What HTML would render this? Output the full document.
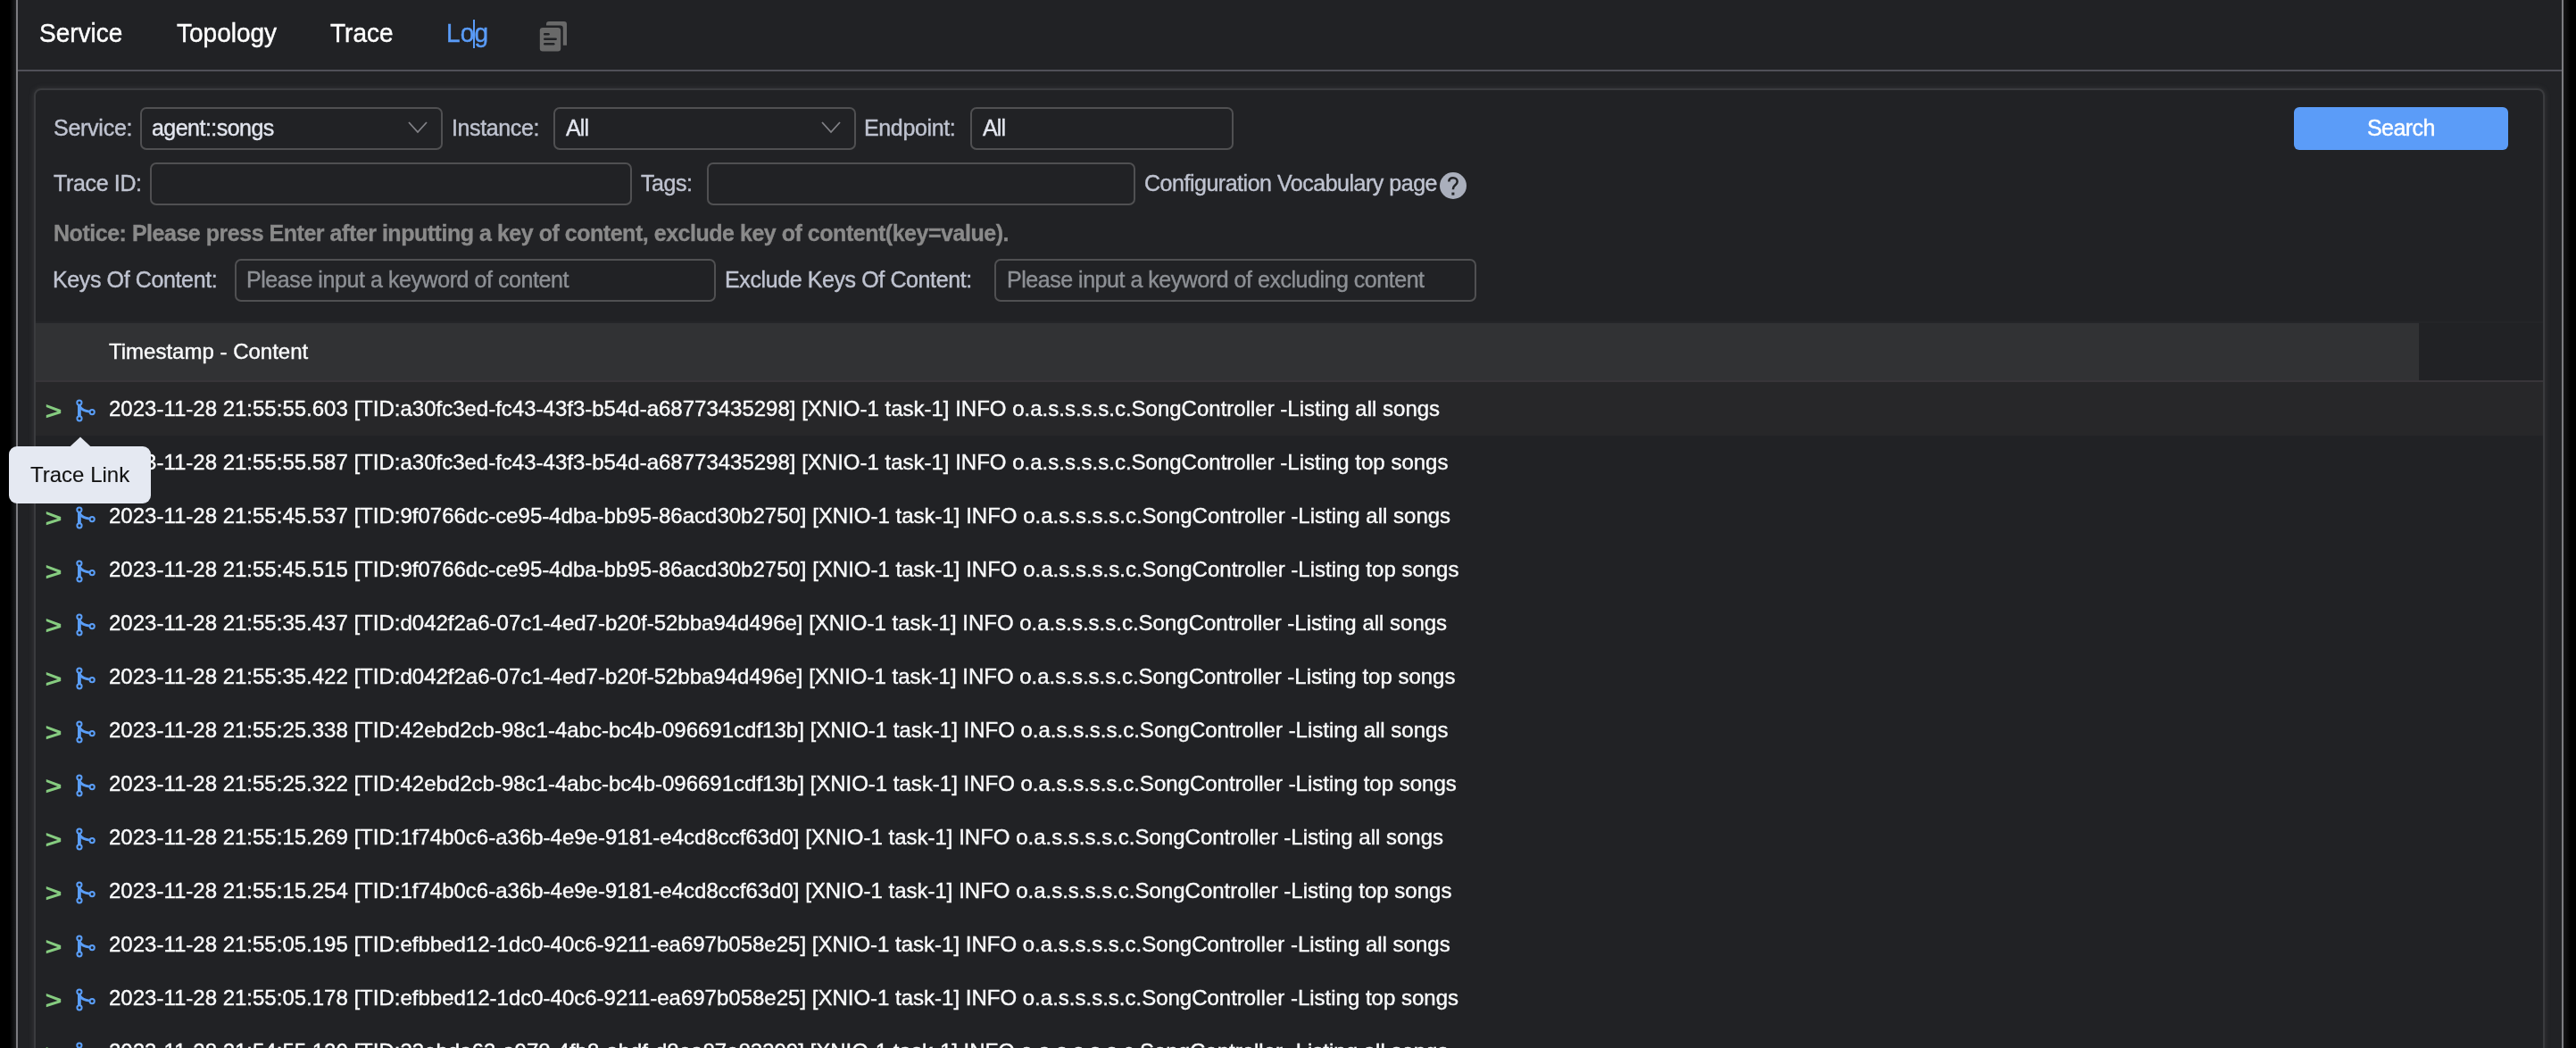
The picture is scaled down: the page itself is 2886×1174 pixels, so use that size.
<!DOCTYPE html>
<html><head><meta charset="utf-8">
<style>
*{box-sizing:border-box;margin:0;padding:0}
html,body{width:2886px;height:1174px;overflow:hidden;background:#000;font-family:"Liberation Sans",sans-serif}
.abs{position:absolute}
#lshadow{position:absolute;left:0;top:0;width:18px;height:1174px;background:linear-gradient(to right,#000 0,#000 11px,#1e1f21 18px)}
#rshadow{position:absolute;left:2871px;top:0;width:15px;height:1174px;background:linear-gradient(to left,#000 0,#000 6px,#161617 14px)}
#main{position:absolute;left:18px;top:0;width:2854px;height:1174px;background:#212225;border-left:2px solid #7c7c80;border-right:2px solid #7c7c80}
.t{position:absolute;white-space:pre;line-height:1;-webkit-text-stroke-width:0.4px;will-change:transform}
.nav{font-size:28px;color:#fff;top:24px;transform:scaleY(1.07);transform-origin:0 23.7px}
#navline{position:absolute;left:20px;top:78px;width:2850px;height:2px;background:#505058}
#panel{position:absolute;left:38px;top:99px;width:2813px;height:1200px;border:2px solid #3a3b3e;border-radius:8px;background:#212225;box-shadow:0 0 6px rgba(110,110,115,0.28)}
.lbl{font-size:25px;color:#bfc3d0}
.inp{position:absolute;height:48px;border:2px solid #505052;border-radius:7px}
.val{font-size:25px;color:#e2e5ee}
.ph{font-size:25px;color:#8d9095}
.rt{font-size:24px;color:#fafbfc;letter-spacing:0px}
</style></head><body>
<div id="lshadow"></div>
<div id="rshadow"></div>
<div id="main"></div>
<div class="t nav" style="left:44px">Service</div>
<div class="t nav" style="left:198px">Topology</div>
<div class="t nav" style="left:370px">Trace</div>
<div class="t nav" style="left:500px;color:#5a9cf8;letter-spacing:0.2px">Log</div>
<div class="abs" style="left:530px;top:22px;width:2px;height:32px;background:#5a9cf8"></div>
<svg class="abs" style="left:600px;top:20px" width="40" height="42" viewBox="600 20 40 42">
  <path d="M612 28.4 V27 a3 3 0 0 1 3-3 H632 a3 3 0 0 1 3 3 V50.8 H630.8 V31.5 a3 3 0 0 0 -3-3 Z" fill="#696969"/>
  <rect x="604.8" y="31" width="23.4" height="26.5" rx="3.2" fill="#696969"/>
  <rect x="609" y="37" width="6.8" height="2.6" rx="1.3" fill="#212225"/>
  <rect x="609" y="42.4" width="14.9" height="2.6" rx="1.3" fill="#212225"/>
  <rect x="609" y="47.9" width="12.5" height="2.6" rx="1.3" fill="#212225"/>
</svg>
<div id="navline"></div>
<div id="panel"></div>

<!-- row 1 -->
<div class="t lbl" style="left:60px;top:131px;letter-spacing:-0.26px">Service:</div>
<div class="inp" style="left:157px;top:120px;width:339px"></div>
<div class="t val" style="left:170.4px;top:131px;letter-spacing:-0.53px">agent::songs</div>
<svg class="abs" style="left:455px;top:134px" width="26" height="18" viewBox="0 0 26 18"><polyline points="3,3 13,14 23,3" fill="none" stroke="#828287" stroke-width="1.8"/></svg>
<div class="t lbl" style="left:505.6px;top:131px;letter-spacing:-0.375px">Instance:</div>
<div class="inp" style="left:620px;top:120px;width:339px"></div>
<div class="t val" style="left:633.8px;top:131px;letter-spacing:-0.85px">All</div>
<svg class="abs" style="left:918px;top:134px" width="26" height="18" viewBox="0 0 26 18"><polyline points="3,3 13,14 23,3" fill="none" stroke="#828287" stroke-width="1.8"/></svg>
<div class="t lbl" style="left:967.9px;top:131px;letter-spacing:-0.363px">Endpoint:</div>
<div class="inp" style="left:1087px;top:120px;width:295px"></div>
<div class="t val" style="left:1100.8px;top:131px;letter-spacing:-0.85px">All</div>
<div class="abs" style="left:2570px;top:120px;width:240px;height:48px;background:#5b9cf8;border-radius:6px"></div>
<div class="t" style="left:2651.9px;top:131px;font-size:25px;color:#fff;letter-spacing:-0.56px">Search</div>

<!-- row 2 -->
<div class="t lbl" style="left:60px;top:193px;letter-spacing:-0.35px">Trace ID:</div>
<div class="inp" style="left:168px;top:182px;width:540px;height:48px"></div>
<div class="t lbl" style="left:718px;top:193px;letter-spacing:-0.425px">Tags:</div>
<div class="inp" style="left:792px;top:182px;width:480px;height:48px"></div>
<div class="t lbl" style="left:1281.7px;top:193px;letter-spacing:-0.479px">Configuration Vocabulary page</div>
<svg class="abs" style="left:1608px;top:188px" width="40" height="40" viewBox="1608 188 40 40">
  <circle cx="1628" cy="208" r="15" fill="#aaafbc"/>
  <path d="M1623.3,203.6 C1623.3,200.6 1625.4,199.3 1628,199.3 C1630.7,199.3 1632.7,201.1 1632.7,203.4 C1632.7,205.6 1631.3,206.6 1629.9,207.8 C1628.5,209 1627.9,210.2 1627.9,212.2" fill="none" stroke="#212225" stroke-width="2.5"/>
  <rect x="1626.4" y="215.6" width="3" height="3" fill="#212225"/>
</svg>

<!-- notice -->
<div class="t" style="left:59.7px;top:249px;font-size:25px;font-weight:bold;color:#8a8a8a;letter-spacing:-0.473px;-webkit-text-stroke-width:0.35px">Notice: Please press Enter after inputting a key of content, exclude key of content(key=value).</div>

<!-- row 4 -->
<div class="t lbl" style="left:58.7px;top:301px;letter-spacing:-0.38px">Keys Of Content:</div>
<div class="inp" style="left:263px;top:290px;width:539px;height:48px"></div>
<div class="t ph" style="left:275.6px;top:301px;letter-spacing:-0.431px">Please input a keyword of content</div>
<div class="t lbl" style="left:812px;top:301px;letter-spacing:-0.396px">Exclude Keys Of Content:</div>
<div class="inp" style="left:1114px;top:290px;width:540px;height:48px"></div>
<div class="t ph" style="left:1127.8px;top:301px;letter-spacing:-0.471px">Please input a keyword of excluding content</div>

<!-- table header -->
<div class="abs" style="left:40px;top:360px;width:2809px;height:2px;background:#242528"></div>
<div class="abs" style="left:40px;top:362px;width:2670px;height:64px;background:#313234"></div>
<div class="abs" style="left:40px;top:426px;width:2809px;height:2px;background:#383539"></div>
<div class="t" style="left:122.2px;top:382px;font-size:24px;color:#fafbfc">Timestamp - Content</div>

<div class="abs" style="left:40px;top:428px;width:2809px;height:60px;background:#272729"></div>
<svg class="abs" style="left:44px;top:428px" width="70" height="60" viewBox="44 428 70 60"><g transform="translate(0,0)"><path d="M51.8,453 L68.2,458.9 L68.2,462.9 L51.8,468.2 L51.8,465.1 L64.5,460.9 L51.8,456.1 Z" fill="#86cc80"/><path d="M88.9,454 V466" stroke="#5a9ef8" stroke-width="3.8" fill="none"/><path d="M89.5,455.5 Q92,460 100.5,461.2" stroke="#5a9ef8" stroke-width="2.8" fill="none"/><circle cx="88.9" cy="451.1" r="2.6" stroke="#5a9ef8" stroke-width="2" fill="#212225"/><circle cx="89" cy="468.8" r="2.6" stroke="#5a9ef8" stroke-width="2" fill="#212225"/><circle cx="103.2" cy="461.6" r="2.6" stroke="#5a9ef8" stroke-width="2" fill="#212225"/></g></svg>
<div class="t rt" style="left:121.8px;top:446px">2023-11-28 21:55:55.603 [TID:a30fc3ed-fc43-43f3-b54d-a68773435298] [XNIO-1 task-1] INFO o.a.s.s.s.s.c.SongController -Listing all songs</div>
<svg class="abs" style="left:44px;top:488px" width="70" height="60" viewBox="44 488 70 60"><g transform="translate(0,60)"><path d="M51.8,453 L68.2,458.9 L68.2,462.9 L51.8,468.2 L51.8,465.1 L64.5,460.9 L51.8,456.1 Z" fill="#86cc80"/><path d="M88.9,454 V466" stroke="#5a9ef8" stroke-width="3.8" fill="none"/><path d="M89.5,455.5 Q92,460 100.5,461.2" stroke="#5a9ef8" stroke-width="2.8" fill="none"/><circle cx="88.9" cy="451.1" r="2.6" stroke="#5a9ef8" stroke-width="2" fill="#212225"/><circle cx="89" cy="468.8" r="2.6" stroke="#5a9ef8" stroke-width="2" fill="#212225"/><circle cx="103.2" cy="461.6" r="2.6" stroke="#5a9ef8" stroke-width="2" fill="#212225"/></g></svg>
<div class="t rt" style="left:121.8px;top:506px">2023-11-28 21:55:55.587 [TID:a30fc3ed-fc43-43f3-b54d-a68773435298] [XNIO-1 task-1] INFO o.a.s.s.s.s.c.SongController -Listing top songs</div>
<svg class="abs" style="left:44px;top:548px" width="70" height="60" viewBox="44 548 70 60"><g transform="translate(0,120)"><path d="M51.8,453 L68.2,458.9 L68.2,462.9 L51.8,468.2 L51.8,465.1 L64.5,460.9 L51.8,456.1 Z" fill="#86cc80"/><path d="M88.9,454 V466" stroke="#5a9ef8" stroke-width="3.8" fill="none"/><path d="M89.5,455.5 Q92,460 100.5,461.2" stroke="#5a9ef8" stroke-width="2.8" fill="none"/><circle cx="88.9" cy="451.1" r="2.6" stroke="#5a9ef8" stroke-width="2" fill="#212225"/><circle cx="89" cy="468.8" r="2.6" stroke="#5a9ef8" stroke-width="2" fill="#212225"/><circle cx="103.2" cy="461.6" r="2.6" stroke="#5a9ef8" stroke-width="2" fill="#212225"/></g></svg>
<div class="t rt" style="left:121.8px;top:566px">2023-11-28 21:55:45.537 [TID:9f0766dc-ce95-4dba-bb95-86acd30b2750] [XNIO-1 task-1] INFO o.a.s.s.s.s.c.SongController -Listing all songs</div>
<svg class="abs" style="left:44px;top:608px" width="70" height="60" viewBox="44 608 70 60"><g transform="translate(0,180)"><path d="M51.8,453 L68.2,458.9 L68.2,462.9 L51.8,468.2 L51.8,465.1 L64.5,460.9 L51.8,456.1 Z" fill="#86cc80"/><path d="M88.9,454 V466" stroke="#5a9ef8" stroke-width="3.8" fill="none"/><path d="M89.5,455.5 Q92,460 100.5,461.2" stroke="#5a9ef8" stroke-width="2.8" fill="none"/><circle cx="88.9" cy="451.1" r="2.6" stroke="#5a9ef8" stroke-width="2" fill="#212225"/><circle cx="89" cy="468.8" r="2.6" stroke="#5a9ef8" stroke-width="2" fill="#212225"/><circle cx="103.2" cy="461.6" r="2.6" stroke="#5a9ef8" stroke-width="2" fill="#212225"/></g></svg>
<div class="t rt" style="left:121.8px;top:626px">2023-11-28 21:55:45.515 [TID:9f0766dc-ce95-4dba-bb95-86acd30b2750] [XNIO-1 task-1] INFO o.a.s.s.s.s.c.SongController -Listing top songs</div>
<svg class="abs" style="left:44px;top:668px" width="70" height="60" viewBox="44 668 70 60"><g transform="translate(0,240)"><path d="M51.8,453 L68.2,458.9 L68.2,462.9 L51.8,468.2 L51.8,465.1 L64.5,460.9 L51.8,456.1 Z" fill="#86cc80"/><path d="M88.9,454 V466" stroke="#5a9ef8" stroke-width="3.8" fill="none"/><path d="M89.5,455.5 Q92,460 100.5,461.2" stroke="#5a9ef8" stroke-width="2.8" fill="none"/><circle cx="88.9" cy="451.1" r="2.6" stroke="#5a9ef8" stroke-width="2" fill="#212225"/><circle cx="89" cy="468.8" r="2.6" stroke="#5a9ef8" stroke-width="2" fill="#212225"/><circle cx="103.2" cy="461.6" r="2.6" stroke="#5a9ef8" stroke-width="2" fill="#212225"/></g></svg>
<div class="t rt" style="left:121.8px;top:686px">2023-11-28 21:55:35.437 [TID:d042f2a6-07c1-4ed7-b20f-52bba94d496e] [XNIO-1 task-1] INFO o.a.s.s.s.s.c.SongController -Listing all songs</div>
<svg class="abs" style="left:44px;top:728px" width="70" height="60" viewBox="44 728 70 60"><g transform="translate(0,300)"><path d="M51.8,453 L68.2,458.9 L68.2,462.9 L51.8,468.2 L51.8,465.1 L64.5,460.9 L51.8,456.1 Z" fill="#86cc80"/><path d="M88.9,454 V466" stroke="#5a9ef8" stroke-width="3.8" fill="none"/><path d="M89.5,455.5 Q92,460 100.5,461.2" stroke="#5a9ef8" stroke-width="2.8" fill="none"/><circle cx="88.9" cy="451.1" r="2.6" stroke="#5a9ef8" stroke-width="2" fill="#212225"/><circle cx="89" cy="468.8" r="2.6" stroke="#5a9ef8" stroke-width="2" fill="#212225"/><circle cx="103.2" cy="461.6" r="2.6" stroke="#5a9ef8" stroke-width="2" fill="#212225"/></g></svg>
<div class="t rt" style="left:121.8px;top:746px">2023-11-28 21:55:35.422 [TID:d042f2a6-07c1-4ed7-b20f-52bba94d496e] [XNIO-1 task-1] INFO o.a.s.s.s.s.c.SongController -Listing top songs</div>
<svg class="abs" style="left:44px;top:788px" width="70" height="60" viewBox="44 788 70 60"><g transform="translate(0,360)"><path d="M51.8,453 L68.2,458.9 L68.2,462.9 L51.8,468.2 L51.8,465.1 L64.5,460.9 L51.8,456.1 Z" fill="#86cc80"/><path d="M88.9,454 V466" stroke="#5a9ef8" stroke-width="3.8" fill="none"/><path d="M89.5,455.5 Q92,460 100.5,461.2" stroke="#5a9ef8" stroke-width="2.8" fill="none"/><circle cx="88.9" cy="451.1" r="2.6" stroke="#5a9ef8" stroke-width="2" fill="#212225"/><circle cx="89" cy="468.8" r="2.6" stroke="#5a9ef8" stroke-width="2" fill="#212225"/><circle cx="103.2" cy="461.6" r="2.6" stroke="#5a9ef8" stroke-width="2" fill="#212225"/></g></svg>
<div class="t rt" style="left:121.8px;top:806px">2023-11-28 21:55:25.338 [TID:42ebd2cb-98c1-4abc-bc4b-096691cdf13b] [XNIO-1 task-1] INFO o.a.s.s.s.s.c.SongController -Listing all songs</div>
<svg class="abs" style="left:44px;top:848px" width="70" height="60" viewBox="44 848 70 60"><g transform="translate(0,420)"><path d="M51.8,453 L68.2,458.9 L68.2,462.9 L51.8,468.2 L51.8,465.1 L64.5,460.9 L51.8,456.1 Z" fill="#86cc80"/><path d="M88.9,454 V466" stroke="#5a9ef8" stroke-width="3.8" fill="none"/><path d="M89.5,455.5 Q92,460 100.5,461.2" stroke="#5a9ef8" stroke-width="2.8" fill="none"/><circle cx="88.9" cy="451.1" r="2.6" stroke="#5a9ef8" stroke-width="2" fill="#212225"/><circle cx="89" cy="468.8" r="2.6" stroke="#5a9ef8" stroke-width="2" fill="#212225"/><circle cx="103.2" cy="461.6" r="2.6" stroke="#5a9ef8" stroke-width="2" fill="#212225"/></g></svg>
<div class="t rt" style="left:121.8px;top:866px">2023-11-28 21:55:25.322 [TID:42ebd2cb-98c1-4abc-bc4b-096691cdf13b] [XNIO-1 task-1] INFO o.a.s.s.s.s.c.SongController -Listing top songs</div>
<svg class="abs" style="left:44px;top:908px" width="70" height="60" viewBox="44 908 70 60"><g transform="translate(0,480)"><path d="M51.8,453 L68.2,458.9 L68.2,462.9 L51.8,468.2 L51.8,465.1 L64.5,460.9 L51.8,456.1 Z" fill="#86cc80"/><path d="M88.9,454 V466" stroke="#5a9ef8" stroke-width="3.8" fill="none"/><path d="M89.5,455.5 Q92,460 100.5,461.2" stroke="#5a9ef8" stroke-width="2.8" fill="none"/><circle cx="88.9" cy="451.1" r="2.6" stroke="#5a9ef8" stroke-width="2" fill="#212225"/><circle cx="89" cy="468.8" r="2.6" stroke="#5a9ef8" stroke-width="2" fill="#212225"/><circle cx="103.2" cy="461.6" r="2.6" stroke="#5a9ef8" stroke-width="2" fill="#212225"/></g></svg>
<div class="t rt" style="left:121.8px;top:926px">2023-11-28 21:55:15.269 [TID:1f74b0c6-a36b-4e9e-9181-e4cd8ccf63d0] [XNIO-1 task-1] INFO o.a.s.s.s.s.c.SongController -Listing all songs</div>
<svg class="abs" style="left:44px;top:968px" width="70" height="60" viewBox="44 968 70 60"><g transform="translate(0,540)"><path d="M51.8,453 L68.2,458.9 L68.2,462.9 L51.8,468.2 L51.8,465.1 L64.5,460.9 L51.8,456.1 Z" fill="#86cc80"/><path d="M88.9,454 V466" stroke="#5a9ef8" stroke-width="3.8" fill="none"/><path d="M89.5,455.5 Q92,460 100.5,461.2" stroke="#5a9ef8" stroke-width="2.8" fill="none"/><circle cx="88.9" cy="451.1" r="2.6" stroke="#5a9ef8" stroke-width="2" fill="#212225"/><circle cx="89" cy="468.8" r="2.6" stroke="#5a9ef8" stroke-width="2" fill="#212225"/><circle cx="103.2" cy="461.6" r="2.6" stroke="#5a9ef8" stroke-width="2" fill="#212225"/></g></svg>
<div class="t rt" style="left:121.8px;top:986px">2023-11-28 21:55:15.254 [TID:1f74b0c6-a36b-4e9e-9181-e4cd8ccf63d0] [XNIO-1 task-1] INFO o.a.s.s.s.s.c.SongController -Listing top songs</div>
<svg class="abs" style="left:44px;top:1028px" width="70" height="60" viewBox="44 1028 70 60"><g transform="translate(0,600)"><path d="M51.8,453 L68.2,458.9 L68.2,462.9 L51.8,468.2 L51.8,465.1 L64.5,460.9 L51.8,456.1 Z" fill="#86cc80"/><path d="M88.9,454 V466" stroke="#5a9ef8" stroke-width="3.8" fill="none"/><path d="M89.5,455.5 Q92,460 100.5,461.2" stroke="#5a9ef8" stroke-width="2.8" fill="none"/><circle cx="88.9" cy="451.1" r="2.6" stroke="#5a9ef8" stroke-width="2" fill="#212225"/><circle cx="89" cy="468.8" r="2.6" stroke="#5a9ef8" stroke-width="2" fill="#212225"/><circle cx="103.2" cy="461.6" r="2.6" stroke="#5a9ef8" stroke-width="2" fill="#212225"/></g></svg>
<div class="t rt" style="left:121.8px;top:1046px">2023-11-28 21:55:05.195 [TID:efbbed12-1dc0-40c6-9211-ea697b058e25] [XNIO-1 task-1] INFO o.a.s.s.s.s.c.SongController -Listing all songs</div>
<svg class="abs" style="left:44px;top:1088px" width="70" height="60" viewBox="44 1088 70 60"><g transform="translate(0,660)"><path d="M51.8,453 L68.2,458.9 L68.2,462.9 L51.8,468.2 L51.8,465.1 L64.5,460.9 L51.8,456.1 Z" fill="#86cc80"/><path d="M88.9,454 V466" stroke="#5a9ef8" stroke-width="3.8" fill="none"/><path d="M89.5,455.5 Q92,460 100.5,461.2" stroke="#5a9ef8" stroke-width="2.8" fill="none"/><circle cx="88.9" cy="451.1" r="2.6" stroke="#5a9ef8" stroke-width="2" fill="#212225"/><circle cx="89" cy="468.8" r="2.6" stroke="#5a9ef8" stroke-width="2" fill="#212225"/><circle cx="103.2" cy="461.6" r="2.6" stroke="#5a9ef8" stroke-width="2" fill="#212225"/></g></svg>
<div class="t rt" style="left:121.8px;top:1106px">2023-11-28 21:55:05.178 [TID:efbbed12-1dc0-40c6-9211-ea697b058e25] [XNIO-1 task-1] INFO o.a.s.s.s.s.c.SongController -Listing top songs</div>
<svg class="abs" style="left:44px;top:1148px" width="70" height="60" viewBox="44 1148 70 60"><g transform="translate(0,720)"><path d="M51.8,453 L68.2,458.9 L68.2,462.9 L51.8,468.2 L51.8,465.1 L64.5,460.9 L51.8,456.1 Z" fill="#86cc80"/><path d="M88.9,454 V466" stroke="#5a9ef8" stroke-width="3.8" fill="none"/><path d="M89.5,455.5 Q92,460 100.5,461.2" stroke="#5a9ef8" stroke-width="2.8" fill="none"/><circle cx="88.9" cy="451.1" r="2.6" stroke="#5a9ef8" stroke-width="2" fill="#212225"/><circle cx="89" cy="468.8" r="2.6" stroke="#5a9ef8" stroke-width="2" fill="#212225"/><circle cx="103.2" cy="461.6" r="2.6" stroke="#5a9ef8" stroke-width="2" fill="#212225"/></g></svg>
<div class="t rt" style="left:121.8px;top:1166px">2023-11-28 21:54:55.120 [TID:33ebda63-a978-4fb8-abdf-d8ea87e83399] [XNIO-1 task-1] INFO o.a.s.s.s.s.c.SongController -Listing all songs</div>

<!-- tooltip -->
<svg class="abs" style="left:0;top:480px" width="200" height="100" viewBox="0 480 200 100">
  <path d="M78.2,500.5 L90,489.4 L101.8,500.5 Z" fill="#e5e9f2"/>
  <rect x="10" y="500" width="159" height="64" rx="9" fill="#e5e9f2"/>
</svg>
<div class="t" style="left:34.1px;top:519.5px;font-size:24px;color:#111;-webkit-text-stroke-width:0.1px">Trace Link</div>
</body></html>
